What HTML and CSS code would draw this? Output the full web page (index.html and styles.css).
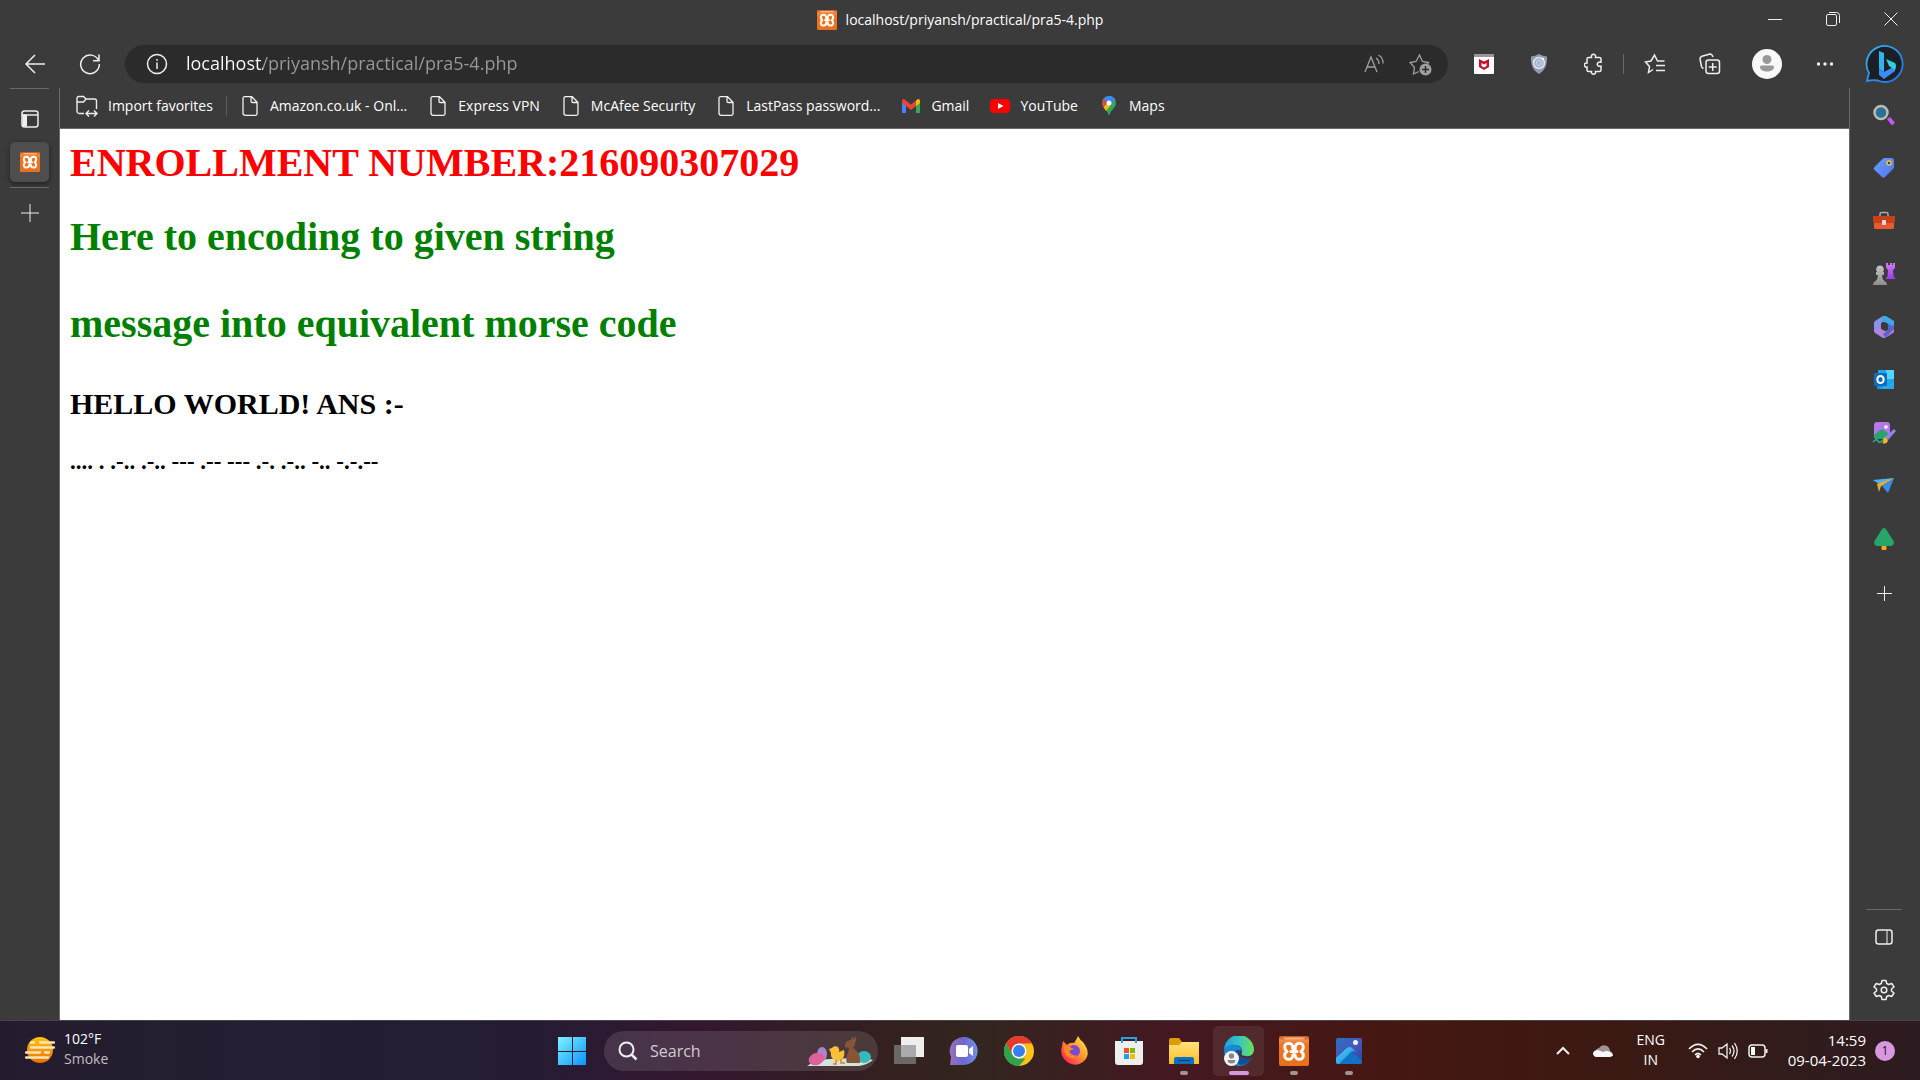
FILE: index.html
```html
<!DOCTYPE html>
<html lang="en">
<head>
<meta charset="utf-8">
<title>localhost/priyansh/practical/pra5-4.php</title>
<link rel="stylesheet" href="styles.css">
</head>
<body>
<svg class="defs" aria-hidden="true">
  <defs>
    <linearGradient id="orange" x1="0" y1="0" x2="0" y2="1"><stop offset="0" stop-color="#c85a14"/><stop offset=".15" stop-color="#f08a45"/><stop offset=".3" stop-color="#ee7420"/><stop offset="1" stop-color="#e8701c"/></linearGradient>
    <linearGradient id="bing" x1="0" y1="0" x2="1" y2="1"><stop offset="0" stop-color="#2bb8f0"/><stop offset="1" stop-color="#2a6cf0"/></linearGradient>
    <linearGradient id="purple" x1="0" y1="0" x2="0" y2="1"><stop offset="0" stop-color="#d07af5"/><stop offset="1" stop-color="#9a3be8"/></linearGradient>
    <linearGradient id="grey" x1="0" y1="0" x2="0" y2="1"><stop offset="0" stop-color="#c4c4c4"/><stop offset="1" stop-color="#8e8e8e"/></linearGradient>
    <linearGradient id="blue" x1="0" y1="0" x2="1" y2="1"><stop offset="0" stop-color="#6aa0ff"/><stop offset="1" stop-color="#5173f0"/></linearGradient>
    <linearGradient id="win" x1="0" y1="0" x2="1" y2="1"><stop offset="0" stop-color="#7df3ff"/><stop offset="1" stop-color="#0a93ff"/></linearGradient>
    <linearGradient id="sun" x1="0" y1="0" x2="0" y2="1"><stop offset="0" stop-color="#fcc510"/><stop offset="1" stop-color="#ee6c05"/></linearGradient>
    <linearGradient id="chat" x1="0" y1="0" x2="1" y2="0"><stop offset="0" stop-color="#9a6fb8"/><stop offset=".5" stop-color="#6a68d0"/><stop offset="1" stop-color="#7590e8"/></linearGradient>
    <linearGradient id="fire" x1="1" y1="0" x2="0" y2="1"><stop offset="0" stop-color="#fff44f"/><stop offset=".45" stop-color="#ff9a2c"/><stop offset=".8" stop-color="#ff3a4c"/><stop offset="1" stop-color="#e3158a"/></linearGradient>
    <linearGradient id="folder" x1="0" y1="0" x2="0" y2="1"><stop offset="0" stop-color="#ffe07a"/><stop offset="1" stop-color="#fcbf2a"/></linearGradient>
    <linearGradient id="edge" x1="0" y1="0" x2="1" y2="0"><stop offset="0" stop-color="#1f9ee0"/><stop offset=".5" stop-color="#35c4c8"/><stop offset="1" stop-color="#6be352"/></linearGradient>
    <linearGradient id="photo" x1="0" y1="0" x2="1" y2="1"><stop offset="0" stop-color="#2470c8"/><stop offset=".5" stop-color="#4d55b8"/><stop offset="1" stop-color="#1b50a4"/></linearGradient>
    <linearGradient id="peak" x1="0" y1="0" x2="1" y2="1"><stop offset="0" stop-color="#4fd6fb"/><stop offset="1" stop-color="#1681dd"/></linearGradient>
    <symbol id="xampp" viewBox="0 0 30 30"><rect width="30" height="30" rx="2" fill="url(#orange)"/><path d="M4 1.500h22l-2 2H6z" fill="#f8b68a"/><path d="M12 15.500h6M15 15.500M13.800 12.500C14.500 5 5 6 5.700 11.500q.3 2.500 2.300 4-2.300 1.500-2.300 4C5.500 24.500 14 25 14 18.700h2C16 25 24.500 24.500 24.300 19.500q0-2.500-2.300-4 2-1.500 2.300-4C25 6 15.500 5 16.200 12.500V15" fill="none" stroke="#fff" stroke-width="3" stroke-linejoin="round" stroke-linecap="round"/></symbol>
    <symbol id="page" viewBox="0 0 20 20"><path d="M4 .7h7.500L17 6.200v11.600c0 .9-.6 1.500-1.500 1.500h-10C4.600 19.300 3 18.700 3 17.300V2.200C3 1.300 3.500.7 4.500.7zM11 1v4.300c0 .8.5 1.200 1.200 1.200H17" fill="none" stroke="#f2f2f2" stroke-width="1.300"/></symbol>
  </defs>
</svg>

<div class="browser">
  <header class="titlebar">
    <div class="title"><svg width="20" height="20"><use href="#xampp"/></svg><span>localhost/priyansh/practical/pra5-4.php</span></div>
    <div class="controls">
      <button aria-label="Minimize"><svg width="14" height="14" class="line"><path d="M0 7.500h14"/></svg></button>
      <button aria-label="Restore"><svg width="14" height="14" class="line"><rect x=".5" y="2.500" width="10" height="11" rx="1.500"/><path d="M3 .5h7.500q3 0 3 3V11"/></svg></button>
      <button aria-label="Close"><svg width="14" height="14" class="line"><path d="M.5.500l13 13M13.500.500l-13 13"/></svg></button>
    </div>
  </header>

  <nav class="toolbar" aria-label="Navigation">
    <button class="nav-button" aria-label="Back"><svg width="22" height="20" class="line"><path d="M11 1L2 10l9 9M2 10h19" stroke-width="1.500"/></svg></button>
    <button class="nav-button" aria-label="Refresh"><svg width="22" height="22" class="line"><path d="M19.500 7.500A9.300 9.300 0 1 0 20.300 11M20 1.500V7.700h-6" stroke-width="1.500"/></svg></button>
    <div class="address">
      <button aria-label="View site information"><svg width="22" height="22" class="line"><circle cx="11" cy="11" r="9.500" stroke-width="1.500"/><path d="M11 9.500V16M11 6v1.700" stroke-width="1.500"/></svg></button>
      <input type="text" aria-label="Address" value="localhost/priyansh/practical/pra5-4.php" spellcheck="false">
      <button aria-label="Read aloud"><svg width="22" height="20" class="line dim"><path d="M2 18L8 3l6 15M4 13h8M13 4q3 2 3 6M15.500 1q5 3 4.500 8.500" stroke-width="1.300"/></svg></button>
      <button aria-label="Add to favorites"><svg width="23" height="23" class="line dim"><path d="M10 18.500L4.500 21l1-6.500L1 9.500l6-1L10.500 2l3 6.500 6 1-1.500 2" stroke-width="1.300"/><circle cx="16.500" cy="16.500" r="6" fill="#a0a0a0" stroke="none"/><path d="M16.500 13v7M13 16.500h7" stroke="#2b2b2b" stroke-width="1.500"/></svg></button>
    </div>
    <button class="tool" aria-label="McAfee WebAdvisor"><svg width="20" height="20"><rect width="20" height="20" rx="1" fill="#fff"/><path d="M0 0h20v3H0z" fill="#9c9595"/><path d="M5 5l5 2.500L15 5v8l-5 3-5-3z" fill="#c8102e"/><path d="M7.500 9l2.500 1.500L12.500 9v3L10 13.500 7.500 12z" fill="#fff"/></svg></button>
    <button class="tool" aria-label="Privacy shield"><svg width="18" height="20"><path d="M9 0q4 2 8 2.500C17.500 12 14 17 9 20 4 17 .5 12 1 2.500Q5 2 9 0z" fill="#8e9bb3"/><circle cx="9" cy="9" r="5.500" fill="#a9b4c9" stroke="#dfe5ef" stroke-width="1.500"/><circle cx="9" cy="9" r="2.500" fill="none" stroke="#cfd7e5"/><circle cx="13" cy="5" r="1.200" fill="#fff"/></svg></button>
    <button class="tool" aria-label="Extensions"><svg width="20" height="22" class="line"><path d="M4.500 4.500h3C6.500 0 12.500 0 11.500 4.500h4q1.500 0 1.500 1.500v3.200c-5-1-5 5 0 4V17q0 1.500-1.500 1.500h-4c1 3.500-5 3.500-4 0h-3Q3 18.500 3 17v-3c-3.500 1-3.500-5 0-4V6q0-1.500 1.500-1.500z" stroke-width="1.500"/></svg></button>
    <span class="divider"></span>
    <button class="tool" aria-label="Favorites"><svg width="22" height="22" class="line"><path d="M9 16.500L4.500 19.500l1-6L1.500 9l5.500-1L10.500 2l3 6h7M12 12.500h9M12 17.500h9" stroke-width="1.500"/></svg></button>
    <button class="tool" aria-label="Collections"><svg width="22" height="22" class="line"><rect x="7" y="7" width="13.500" height="13.500" rx="2.500" stroke-width="1.500"/><path d="M13.700 10v8M9.700 14h8M4.500 15.500Q3 15 2.500 13.500L1 6q0-2 2-2.700L11 1q2 0 3 3" stroke-width="1.500"/></svg></button>
    <button class="profile" aria-label="Profile"><svg width="30" height="30"><circle cx="15" cy="15" r="15" fill="#f8f8f8"/><circle cx="15" cy="10.500" r="4.500" fill="#999"/><path d="M9.500 16.500h11q1.500 0 1.500 1.500c0 6-14 6-14 0q0-1.500 1.500-1.500z" fill="#999"/></svg></button>
    <button class="tool" aria-label="Settings and more"><svg width="18" height="4" fill="#eee"><circle cx="2.500" cy="2" r="1.700"/><circle cx="9" cy="2" r="1.700"/><circle cx="15.500" cy="2" r="1.700"/></svg></button>
    <button class="copilot" aria-label="Discover"><svg width="40" height="40"><path d="M2 37l2-8A18 18 0 1 1 20 38q-4 0-7-1.500-5-1-11 .5z" fill="#1c1f24" stroke="url(#bing)" stroke-width="1.800"/><path d="M14 7l5 2v19l-5-3z" fill="#30b4f0"/><path d="M14 25l5 3 11-6v5l-11 8-5-4z" fill="#3d8bfa"/><path d="M21 15l9 4q2 3 0 7l-6-4z" fill="#2cd0e0"/></svg></button>
  </nav>

  <div class="workspace">
    <aside class="tabs" aria-label="Tabs">
      <button aria-label="Tab actions"><svg width="18" height="18" class="line"><rect x="1" y="1" width="16" height="16" rx="2.500" stroke-width="1.500"/><path d="M1 5h16" stroke-width="1.500"/><path d="M2 5h3.500v11H3l-1-1z" fill="#eee"/></svg></button>
      <button class="active" aria-label="pra5-4.php"><svg width="20" height="20"><use href="#xampp"/></svg></button>
      <button class="add" aria-label="New tab"><svg width="18" height="18" class="line"><path d="M9 0v18M0 9h18"/></svg></button>
    </aside>

    <div class="center">
      <nav class="bookmarks" aria-label="Favorites bar">
        <button><svg width="22" height="22" class="line"><path d="M8 18.500H3.500Q1 18.500 1 16V3.500Q1 1.500 3 1.500h4.500L10 4 7.500 7H1M10 4h8.500q2 0 2 2v8M10 18.500h10.500M13 15.500l-3 3 3 3M18 15.500l3 3-3 3" stroke-width="1.400"/></svg>Import favorites</button>
        <span class="rule"></span>
        <a href="#amazon"><svg width="20" height="20"><use href="#page"/></svg>Amazon.co.uk - Onl...</a>
        <a href="#vpn"><svg width="20" height="20"><use href="#page"/></svg>Express VPN</a>
        <a href="#mcafee"><svg width="20" height="20"><use href="#page"/></svg>McAfee Security</a>
        <a href="#lastpass"><svg width="20" height="20"><use href="#page"/></svg>LastPass password...</a>
        <a href="#gmail"><svg width="20" height="20"><path d="M1 5v12h4V7z" fill="#4285f4"/><path d="M19 5v12h-4V7z" fill="#34a853"/><path d="M15 4.500l2-1.500q2 0 2 2v2l-4 3z" fill="#fbbc04"/><path d="M5 10L1 7V5q0-2 2-2l7 5.500L15 4.500V10l-5 4z" fill="#ea4335"/></svg>Gmail</a>
        <a href="#youtube"><svg width="20" height="20"><rect y="3" width="20" height="14" rx="4" fill="#f00"/><path d="M8 7l5.500 3L8 13z" fill="#fff"/></svg>YouTube</a>
        <a href="#maps"><svg width="20" height="20"><path d="M10 20C9 14 3 12 3 7a7 7 0 0 1 14 0c0 5-6 7-7 13z" fill="#34a853"/><path d="M3.200 5.500A7 7 0 0 1 16.500 4.500L10 9z" fill="#4285f4"/><path d="M4.500 3L8 6l-3.500 5.500Q2 7 4.500 3z" fill="#ea4335"/><path d="M4.500 11L8 8l3 2-4 5z" fill="#fbbc04"/><circle cx="10" cy="7" r="2.500" fill="#fff"/></svg>Maps</a>
      </nav>
      <main class="document">
        <h1 class="enrollment">ENROLLMENT NUMBER:216090307029</h1>
        <h1 class="intro">Here to encoding to given string</h1>
        <h1 class="intro">message into equivalent morse code</h1>
        <h2>HELLO WORLD! ANS :-</h2>
        <h3>.... . .-.. .-.. --- .-- --- .-. .-.. -.. -.-.--</h3>
      </main>
    </div>

    <aside class="sidebar" aria-label="Sidebar">
      <button aria-label="Search"><svg width="24" height="24"><path d="M15 16l3-2 4.500 5q0 3-3 3z" fill="#c657f5"/><circle cx="9" cy="9.500" r="6.500" fill="#2a7194" stroke="#bdb9b5" stroke-width="2.500"/></svg></button>
      <button aria-label="Shopping"><svg width="24" height="24"><path d="M12 2h7q3 0 3 3v6q0 1-1 2l-8 8q-1.500 1.500-3 0L2.500 14q-1.500-1.500 0-3L10.500 3z" fill="url(#blue)"/><circle cx="17" cy="7" r="2" fill="#28418a" stroke="#f5c518" stroke-width="1.500"/></svg></button>
      <button aria-label="Tools"><svg width="24" height="24"><path d="M8 7V5q0-1.500 1.500-1.500h5Q16 3.500 16 5v2" fill="none" stroke="#aaa" stroke-width="1.500"/><rect x="2" y="11" width="20" height="9" rx="1.500" fill="#e65a32"/><path d="M1 7h22v5q0 2-2 2H3q-2 0-2-2z" fill="#c94018"/><rect x="10" y="11" width="4" height="5" rx="1" fill="#ddd"/></svg></button>
      <button aria-label="Games"><svg width="24" height="24"><path d="M14 1h2v2h2V1h2v2h1V1h2v5l-2 2 .5 6 2 3H13.500l2-3L16 8l-2-2z" fill="url(#purple)"/><path d="M8 3.500a4 4 0 0 1 3 6.500h1v3h-2q0 4 2.500 6 2.500 1 2.500 4H1q0-3 2.500-4Q6 17 6 13H4v-3h1A4 4 0 0 1 8 3.500z" fill="url(#grey)"/></svg></button>
      <button aria-label="Microsoft 365"><svg width="24" height="24"><path d="M11 1L3 6q-1 .5-1 2v9l7-3V8l5-3z" fill="#8b90ea"/><path d="M11 1h3l8 5v9l-6-2V9l-7-3z" fill="#3fa9e8"/><path d="M22 14v2q0 1.500-1 2l-8 5h-2l-8-5-1-2 7-4 4 4z" fill="#b284e0"/><path d="M22 14l-9 9-2-4 5-4V9l6 2z" fill="#5b63c8"/><path d="M9 9l4-2 3 2v5l-3 2-4-2z" fill="#3b3b3b"/></svg></button>
      <button aria-label="Outlook"><svg width="24" height="24"><rect x="6" y="2" width="16" height="18" rx="1" fill="#28a8ea"/><path d="M14 2h8v9h-8z" fill="#50d9ff"/><path d="M5 21V11l9 6 8-6v10z" fill="#1490df"/><path d="M22 12v9H7z" fill="#28a8ea"/><rect x="2" y="5" width="13" height="13" rx="1" fill="#0f6cbd"/><ellipse cx="8.500" cy="11.500" rx="3.200" ry="3.500" fill="none" stroke="#fff" stroke-width="2"/></svg></button>
      <button aria-label="Image creator"><svg width="24" height="24"><rect x="2" y="1" width="16" height="17" rx="3" fill="#b478e8"/><path d="M2 14l6-5q2-1 4 0l6 5-3 4H4z" fill="#27a567"/><circle cx="14" cy="6" r="1.800" fill="#fff"/><path d="M1 21q4-4 5-1t5-1" fill="none" stroke="#25b884" stroke-width="1.500"/><path d="M22 8l2 2-8 9-3-3z" fill="#8b83f0"/><path d="M13 16l3 3q-1 5-6 3 2-1 1-4z" fill="#f6b52e"/></svg></button>
      <button aria-label="Drop"><svg width="24" height="24"><path d="M1 6l21-2-12 8z" fill="#4ab4f4"/><path d="M22 4l-6 15-6-7z" fill="#378fe8"/><path d="M22 4L5 10l2 8 2-6z" fill="#f7ab22"/></svg></button>
      <button aria-label="Tree"><svg width="24" height="24"><rect x="9.500" y="18" width="5" height="5" rx="1" fill="#f5a623"/><path d="M9.500 3q2.500-4 5 0l7 11q1.500 4-2.500 5H5q-4-1-2.500-5z" fill="#26a767"/></svg></button>
      <button class="customize" aria-label="Customize"><svg width="15" height="15" class="line"><path d="M7.500 0v15M0 7.500h15"/></svg></button>
      <div class="sidebar-end">
        <button aria-label="Hide sidebar"><svg width="18" height="18" class="line"><rect x="1" y="2" width="16" height="14" rx="2.500" stroke-width="1.500"/><path d="M12 2v14"/></svg></button>
        <button aria-label="Settings"><svg width="22" height="22" class="line"><path d="M9 1.500h4l.7 3 2 1 3-1 2.300 3.500L18.500 10v2l2.500 2-2.300 3.500-3-1-2 1-.7 3H9l-.7-3-2-1-3 1L1 14l2.500-2v-2L1 8l2.300-3.500 3 1 2-1z" stroke-width="1.500" stroke-linejoin="round"/><circle cx="11" cy="11" r="2.800" stroke-width="1.500"/></svg></button>
      </div>
    </aside>
  </div>
</div>

<footer class="taskbar">
  <button class="weather">
    <svg width="30" height="28"><circle cx="15" cy="14" r="13" fill="url(#sun)"/><path d="M6 6.500h3M15 6.500h14M6 11.500h23M1 16.500h14M20 16.500h4M1 21.500h22" stroke="#f7e6b8" stroke-width="2.300" stroke-linecap="round"/></svg>
    <span class="stack"><span>102°F</span><span class="muted">Smoke</span></span>
  </button>

  <div class="apps">
    <button aria-label="Start"><svg width="30" height="30"><path d="M1 1h14v14H1zM16 1h13v14H16zM1 16h14v13H1zM16 16h13v13H16z" fill="url(#win)"/></svg></button>
    <label class="search">
      <svg width="20" height="20" class="line"><circle cx="8.500" cy="8.500" r="7" stroke-width="2"/><path d="M13.500 13.500l5 5" stroke-width="2.500"/></svg>
      <input type="text" placeholder="Search" aria-label="Search">
      <svg width="66" height="32"><path d="M0 31q10-7 22-7l25-1q15 0 19 2-6 5-14 6z" fill="#cfe6d8"/><ellipse cx="15" cy="19" rx="5" ry="7" fill="#a888cc"/><ellipse cx="9.500" cy="24" rx="8" ry="6" fill="#e0609a" transform="rotate(-20 9.500 24)"/><ellipse cx="57" cy="22" rx="7" ry="6" fill="#35b9bd"/><path d="M22 14l3-1q2-3 6-1 2 3 1 5l5-2q1 5-1 8-4 5-8 2-5-2-4-7z" fill="#fbc036"/><path d="M29 25v4h-3M34 24v4h4" fill="none" stroke="#e8762c" stroke-width="1.500"/><path d="M38 9q2-4 6-4l1-4 2 3 2-3q1 4-1 7 0 3-2 5 8 4 7 15H40q-2-5 1-10l1-5-4-1z" fill="#885438"/></svg>
    </label>
    <button aria-label="Task view"><svg width="30" height="30"><path d="M0 9h22v19H0z" fill="#696867"/><path d="M7 1h23v20H7z" fill="#eee"/><path d="M7 9h15v12H7z" fill="#aaa"/></svg></button>
    <button aria-label="Chat"><svg width="30" height="30"><path d="M1 29l1-8A14 14 0 1 1 15 29z" fill="url(#chat)"/><rect x="7" y="9" width="12" height="12" rx="2" fill="#fff"/><path d="M20 13l4-3v10l-4-3z" fill="#fff"/></svg></button>
    <button aria-label="Chrome"><svg width="30" height="30"><circle cx="15" cy="15" r="15" fill="#fbc116"/><path d="M2 7.500A15 15 0 0 1 28 7.500H15l-6.500 11z" fill="#e33b2e"/><path d="M2 7.500l6.500 11L15 22.500h6.500L15 30A15 15 0 0 1 2 7.500z" fill="#2ea24c"/><circle cx="15" cy="15" r="7.500" fill="#fff"/><circle cx="15" cy="15" r="6" fill="#3a7df0"/></svg></button>
    <button aria-label="Firefox"><svg width="30" height="30"><path d="M4 5l4 4q3-3 7-2l2-3 2-4q2 4 5 6l2 3q6 9-1 16-8 7-17 1-8-7-5-16z" fill="url(#fire)"/><circle cx="15" cy="15" r="6" fill="#7c48d8"/><path d="M5 10l6 1 4 2-5 2q3 6 9 4-4 5-10 2-5-4-4-11z" fill="#ff8a20"/></svg></button>
    <button aria-label="Microsoft Store"><svg width="30" height="30"><path d="M8 7V2h14v5" fill="none" stroke="#22a5de" stroke-width="2"/><path d="M1 5h28v21q0 3-3 3H4q-3 0-3-3z" fill="#eee"/><path d="M8 7V5M22 7V5" stroke="#22a5de" stroke-width="2"/><path d="M10 12h5v5h-5z" fill="#f15024"/><path d="M16 12h5v5h-5z" fill="#7eb900"/><path d="M10 18h5v5h-5z" fill="#1aa3ea"/><path d="M16 18h5v5h-5z" fill="#fdb800"/></svg></button>
    <button class="running" aria-label="File Explorer"><svg width="30" height="30"><path d="M0 4q0-2 2-2h8l3 4h17v10H0z" fill="#dd9b06"/><path d="M0 9h10l3-3h17v22H0z" fill="url(#folder)"/><path d="M5 28v-5q0-2 2-2h16q2 0 2 2v5z" fill="#0d6fc0"/><path d="M9 24.500h12" stroke="#053f78"/></svg></button>
    <button class="running current" aria-label="Microsoft Edge"><svg width="30" height="30"><path d="M0 15Q3 7 11 9q6 1 6 5-4 3-1 7 6 6 12 1-5 8-13 8Q1 29 0 15z" fill="#168bd4"/><path d="M12 14q-4 9 4 15 8 0 12-7-5 2-11-1-3-3-1-7z" fill="#0e4f9c"/><path d="M0 14A15 15 0 0 1 30 14q-1 7-8 6-6 0-4-4Q18 9 11 9 4 8 0 14z" fill="url(#edge)"/><circle cx="7.500" cy="22.500" r="7.500" fill="#f4f4f4"/><circle cx="7.500" cy="20" r="2.700" fill="#888"/><path d="M3.500 24h8q0 3.500-4 3.500t-4-3.500z" fill="#888"/></svg></button>
    <button class="running" aria-label="XAMPP"><svg width="30" height="30"><use href="#xampp"/></svg></button>
    <button class="running" aria-label="Photos"><svg width="26" height="26"><rect width="26" height="26" rx="2" fill="url(#photo)"/><path d="M2 26L13 14q1-1 3 0l10 9v1q0 2-2 2z" fill="#1370c4"/><path d="M0 20L11 10q3-2 5 0l4 4q-3-2-5 0L3 26H2q-2 0-2-2z" fill="url(#peak)"/><circle cx="19.500" cy="4.500" r="2.500" fill="#e8f6ff"/></svg></button>
  </div>

  <div class="tray">
    <button aria-label="Show hidden icons"><svg width="14" height="10" class="line"><path d="M1 8l6-6 6 6" stroke-width="2"/></svg></button>
    <button aria-label="OneDrive"><svg width="20" height="14"><path d="M3 10A4 4 0 0 1 6 4a6 6 0 0 1 11 3q3 1 3 5H3z" fill="#a09490"/><path d="M3 13Q0 12 0 9q1-3 5-3l5 2q6-3 10 3-1 2-3 2z" fill="#f8f8f8"/></svg></button>
    <button class="stack language"><span>ENG</span><span>IN</span></button>
    <button class="status" aria-label="Network, volume and battery">
      <svg width="20" height="16" class="line"><path d="M1 6q9-9 18 0M4 9q6-6 12 0M7 12q3-3 6 0" stroke-width="1.700"/><circle cx="10" cy="13.500" r="1.800" fill="#fff" stroke="none"/></svg>
      <svg width="20" height="18" class="line"><path d="M1 6h3l5-4v14l-5-4H1zM11.500 6q2 3 0 6M14 3.500q4 5.500 0 11M16.500 1q5.500 8 0 16" stroke-width="1.300"/></svg>
      <svg width="20" height="14" class="line"><rect x="1" y="1" width="16" height="12" rx="3" stroke-width="1.500"/><path d="M3 3h4v8H3z" fill="#fff" stroke="none"/><path d="M18.500 5v4" stroke-width="2"/></svg>
    </button>
    <button class="stack clock"><span>14:59</span><span>09-04-2023</span></button>
    <button class="badge" aria-label="1 notification">1</button>
  </div>
</footer>
</body>
</html>
```
FILE: styles.css
```css
* { box-sizing: border-box; }

body {
  margin: 0;
  min-height: 100vh;
  display: flex;
  flex-direction: column;
  background: #3b3b3b;
  color: #fff;
  font: 14px/20px "Open Sans", "Noto Sans", sans-serif;
}

button, input {
  margin: 0;
  padding: 0;
  border: 0;
  background: none;
  color: inherit;
  font: inherit;
}

button {
  display: flex;
  align-items: center;
  justify-content: center;
}

a { color: inherit; text-decoration: none; }
svg { display: block; flex: none; }
.defs { position: absolute; width: 0; height: 0; }
.line { fill: none; stroke: #eee; stroke-width: 1; }
.dim { stroke: #a0a0a0; }

/* Browser frame */
.browser { flex: 1; display: flex; flex-direction: column; }

.titlebar {
  display: grid;
  grid-template-columns: 1fr auto 1fr;
  height: 40px;
}
.title { grid-column: 2; display: flex; align-items: center; gap: 9px; }
.controls { display: flex; justify-content: flex-end; }
.controls button { width: 58px; height: 38px; }

.toolbar { display: flex; align-items: center; height: 48px; padding: 0 2px 0 7px; }
.nav-button { width: 55px; height: 38px; }
.address {
  flex: 1;
  display: flex;
  align-items: center;
  height: 38px;
  margin: 0 8px;
  padding: 0 5px 0 21px;
  border-radius: 19px;
  background: #2b2b2b;
}
.address input {
  flex: 1;
  min-width: 0;
  height: 30px;
  margin-left: 18px;
  padding-bottom: 2px;
  font-size: 18px;
  outline: 0;
  color: transparent;
  background: linear-gradient(90deg, #fff 77px, #999 77px);
  -webkit-background-clip: text;
  background-clip: text;
}
.address input ~ button { width: 46px; height: 38px; }
.tool { width: 55px; height: 40px; }
.profile { width: 60px; height: 40px; }
.copilot { width: 66px; height: 48px; }
.divider { width: 6px; height: 20px; border-left: 1px solid #6a6a6a; margin-left: 2px; margin-right: -2px; }

.workspace { flex: 1; display: flex; }

.tabs {
  width: 60px;
  padding: 0 10px;
  border-right: 1px solid #696969;
}
.tabs button { width: 39px; height: 54px; border-top: 1px solid #696969; padding-top: 6px; }
.tabs .active {
  height: 40px;
  padding: 0;
  border: 0;
  border-radius: 5px;
  background: #4e4e4e;
  box-shadow: 0 2px 5px #222;
}
.tabs .add { height: 50px; margin-top: 5px; padding: 0; }

.center { flex: 1; min-width: 0; display: flex; flex-direction: column; }

.bookmarks {
  display: flex;
  gap: 21px;
  height: 41px;
  padding: 0 16px 4px;
  border-bottom: 1px solid #696969;
  white-space: nowrap;
}
.bookmarks a, .bookmarks button { display: flex; align-items: center; gap: 10px; }
.bookmarks .rule { align-self: center; width: 1px; height: 20px; margin: 0 -8px; background: #5c5c5c; }

/* Page content */
.document {
  flex: 1;
  padding: 11px 10px;
  background: #fff;
  color: #000;
  font-family: "Liberation Serif", "Times New Roman", serif;
}
.document h1, .document h2, .document h3 { margin: 0; }
.document h1 { font-size: 40px; line-height: 46px; }
.document .enrollment { color: #f00; margin-bottom: 28px; }
.document .intro { color: #008000; margin-bottom: 41px; }
.document h2 { font-size: 30px; line-height: 32px; margin-bottom: 28px; }
.document h3 { font-size: 23px; line-height: 27px; }

/* Sidebar */
.sidebar {
  width: 71px;
  display: flex;
  flex-direction: column;
  align-items: center;
  padding-right: 2px;
  border-left: 1px solid #696969;
}
.sidebar button { width: 48px; height: 53px; }
.sidebar .customize { height: 56px; }
.sidebar-end {
  width: 36px;
  margin-top: auto;
  padding-bottom: 4px;
  border-top: 1px solid #696969;
  display: flex;
  flex-direction: column;
  align-items: center;
}

/* Taskbar */
.taskbar {
  display: grid;
  grid-template-columns: 1fr auto 1fr;
  height: 60px;
  border-top: 1px solid #49444c;
  background: linear-gradient(90deg, #251b2e 0, #221e30 10%, #251c34 28%, #33172f 36%, #33201f 46%, #33251f 51%, #431821 61%, #461712 72%, #3b1912 84%, #321b1a 92%, #2c1b20 100%);
}
.stack { display: flex; flex-direction: column; padding-bottom: 2px; }
.weather { justify-self: start; gap: 9px; padding: 0 0 2px 25px; text-align: left; }
.muted { color: #c1bec5; }

.apps { display: flex; align-items: center; }
.apps button { width: 55px; height: 50px; }
.search {
  display: flex;
  align-items: center;
  gap: 12px;
  width: 274px;
  height: 40px;
  margin: 0 3px 0 5px;
  padding: 0 5px 0 14px;
  border-radius: 20px;
  background: rgb(255 255 255 / 12%);
}
.search input { flex: 1; min-width: 0; font-size: 16px; outline: 0; }
.search input::placeholder { color: #d2cbd1; opacity: 1; }
.apps .running { position: relative; }
.running::after {
  content: "";
  position: absolute;
  bottom: 1px;
  left: calc(50% - 4px);
  width: 8px;
  height: 4px;
  border-radius: 2px;
  background: #a29395;
}
.apps .current { width: 51px; margin: 0 2px; border-radius: 5px; background: rgb(255 255 255 / 8%); }
.running.current::after { width: 20px; left: calc(50% - 10px); background: #d898e0; }

.tray { display: flex; align-items: center; justify-content: flex-end; padding-right: 25px; }
.tray button { min-width: 40px; height: 50px; }
.tray .language { width: 56px; }
.tray .status { gap: 10px; padding: 0 9px; }
.tray .clock { align-items: flex-end; margin-left: 11px; font-size: 15px; }
.tray .badge {
  min-width: 20px;
  width: 20px;
  height: 20px;
  margin-left: 9px;
  border-radius: 50%;
  background: #d898e0;
  color: #24141f;
  font-size: 12px;
}
```
